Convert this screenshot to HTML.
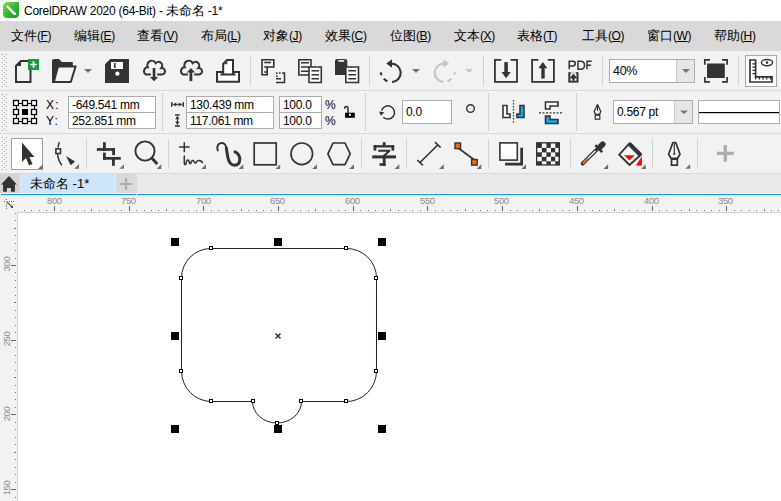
<!DOCTYPE html>
<html><head><meta charset="utf-8">
<style>
*{margin:0;padding:0;box-sizing:border-box}
html,body{width:781px;height:501px;overflow:hidden;background:#fff;font-family:"Liberation Sans",sans-serif;color:#000}
.a{position:absolute}
.mi{position:absolute;top:27px;font-size:13px;line-height:18px;color:#000;white-space:nowrap;font-weight:500}
.t{position:absolute;white-space:nowrap;font-size:12px;line-height:15px;color:#000;letter-spacing:-0.3px}
.inp{position:absolute;background:#fff;border:1px solid #adadad}
.p{font-size:12px;letter-spacing:-0.4px}
.rl{position:absolute;font-size:10px;line-height:10px;color:#8a8a8a;white-space:nowrap;letter-spacing:-0.6px}
</style></head><body>
<!-- backgrounds -->
<div class="a" style="left:0;top:0;width:781px;height:21px;background:#fff"></div>
<div class="a" style="left:0;top:21px;width:781px;height:30px;background:#d9d9d9"></div>
<div class="a" style="left:0;top:51px;width:781px;height:123px;background:#f2f2f2"></div>
<div class="a" style="left:0;top:90px;width:781px;height:1px;background:#dadada"></div>
<div class="a" style="left:0;top:133px;width:781px;height:1px;background:#dadada"></div>
<div class="a" style="left:0;top:173px;width:781px;height:1px;background:#dadada"></div>
<div class="a" style="left:0;top:174px;width:781px;height:19px;background:#e9e9e9"></div>
<div class="a" style="left:0;top:174px;width:20px;height:19px;background:#d4d4d4"></div>
<div class="a" style="left:21px;top:174px;width:94px;height:19px;background:#cde4fa"></div>
<div class="a" style="left:116px;top:174px;width:21px;height:19px;background:#d9d9d9"></div>
<div class="a" style="left:0;top:193px;width:781px;height:1px;background:#f3f3f3"></div><div class="a" style="left:1px;top:194px;width:780px;height:1px;background:#0a9af0"></div>
<div class="a" style="left:0;top:195px;width:781px;height:306px;background:#f2f2f2"></div>
<div class="a" style="left:17px;top:212px;width:764px;height:289px;background:#d0d0d0"></div>
<div class="a" style="left:18px;top:213px;width:763px;height:288px;background:#fff"></div>

<!-- title -->
<div class="t" style="left:24px;top:3.5px;font-size:12px;letter-spacing:-0.25px">CorelDRAW 2020 (64-Bit) - <span style="font-size:12.6px;letter-spacing:0">未命名</span> -1*</div>
<!-- menu -->
<div class="mi" style="left:11px">文件<span class="p">(<u>F</u>)</span></div>
<div class="mi" style="left:74px">编辑<span class="p">(<u>E</u>)</span></div>
<div class="mi" style="left:137px">查看<span class="p">(<u>V</u>)</span></div>
<div class="mi" style="left:201px">布局<span class="p">(<u>L</u>)</span></div>
<div class="mi" style="left:263px">对象<span class="p">(<u>J</u>)</span></div>
<div class="mi" style="left:325px">效果<span class="p">(<u>C</u>)</span></div>
<div class="mi" style="left:390px">位图<span class="p">(<u>B</u>)</span></div>
<div class="mi" style="left:454px">文本<span class="p">(<u>X</u>)</span></div>
<div class="mi" style="left:517px">表格<span class="p">(<u>T</u>)</span></div>
<div class="mi" style="left:582px">工具<span class="p">(<u>O</u>)</span></div>
<div class="mi" style="left:647px">窗口<span class="p">(<u>W</u>)</span></div>
<div class="mi" style="left:714px">帮助<span class="p">(<u>H</u>)</span></div>

<!-- toolbar1 widgets -->
<div class="inp" style="left:609px;top:59px;width:86px;height:24px"></div>
<div class="a" style="left:676px;top:60px;width:18px;height:22px;background:#e6e6e6;border-left:1px solid #c8c8c8"></div>
<div class="t" style="left:613px;top:64px;font-size:12.5px">40%</div>
<div class="a" style="left:745px;top:55px;width:32px;height:32px;background:#fcfcfc;border:1px solid #a8a8a8"></div>


<!-- property bar widgets -->
<div class="t" style="left:46px;top:98px;letter-spacing:1.2px">X:</div>
<div class="t" style="left:46px;top:114px;letter-spacing:1.2px">Y:</div>
<div class="inp" style="left:68px;top:96px;width:88px;height:33px"></div>
<div class="a" style="left:69px;top:112px;width:86px;height:1px;background:#adadad"></div>
<div class="t" style="left:72px;top:98px">-649.541 mm</div>
<div class="t" style="left:72px;top:114px">252.851 mm</div>
<div class="inp" style="left:186px;top:96px;width:88px;height:33px"></div>
<div class="a" style="left:187px;top:112px;width:86px;height:1px;background:#adadad"></div>
<div class="t" style="left:190px;top:98px">130.439 mm</div>
<div class="t" style="left:190px;top:114px">117.061 mm</div>
<div class="inp" style="left:279px;top:96px;width:43px;height:33px"></div>
<div class="a" style="left:280px;top:112px;width:41px;height:1px;background:#adadad"></div>
<div class="t" style="left:283px;top:98px">100.0</div>
<div class="t" style="left:283px;top:114px">100.0</div>
<div class="t" style="left:325px;top:98px">%</div>
<div class="t" style="left:325px;top:114px">%</div>
<div class="inp" style="left:402px;top:100px;width:50px;height:24px"></div>
<div class="t" style="left:406px;top:105px">0.0</div>
<div class="inp" style="left:613px;top:100px;width:80px;height:24px"></div>
<div class="a" style="left:674px;top:101px;width:18px;height:22px;background:#e6e6e6;border-left:1px solid #c8c8c8"></div>
<div class="t" style="left:617px;top:105px">0.567 pt</div>
<div class="inp" style="left:698px;top:100px;width:82px;height:24px"></div>

<!-- tab text -->
<div class="t" style="left:30px;top:175.5px;font-size:13px;line-height:16px;letter-spacing:0px;font-weight:500">未命名 -1*</div>

<!-- rulers labels -->
<div class="rl" style="left:47px;top:196px;font-size:9.5px;letter-spacing:-0.4px">800</div>
<div class="rl" style="left:121px;top:196px;font-size:9.5px;letter-spacing:-0.4px">750</div>
<div class="rl" style="left:196px;top:196px;font-size:9.5px;letter-spacing:-0.4px">700</div>
<div class="rl" style="left:270px;top:196px;font-size:9.5px;letter-spacing:-0.4px">650</div>
<div class="rl" style="left:345px;top:196px;font-size:9.5px;letter-spacing:-0.4px">600</div>
<div class="rl" style="left:420px;top:196px;font-size:9.5px;letter-spacing:-0.4px">550</div>
<div class="rl" style="left:494px;top:196px;font-size:9.5px;letter-spacing:-0.4px">500</div>
<div class="rl" style="left:569px;top:196px;font-size:9.5px;letter-spacing:-0.4px">450</div>
<div class="rl" style="left:644px;top:196px;font-size:9.5px;letter-spacing:-0.4px">400</div>
<div class="rl" style="left:718px;top:196px;font-size:9.5px;letter-spacing:-0.4px">350</div>

<svg class="a" style="left:0;top:0" width="781" height="501" viewBox="0 0 781 501">
<defs>
  <pattern id="grip" width="4" height="4" patternUnits="userSpaceOnUse">
    <rect x="0" y="0" width="1" height="1" fill="#c4c4c4"/><rect x="2" y="2" width="1" height="1" fill="#c4c4c4"/>
  </pattern>
  <g id="cm"><path d="M0,4.6 L4.8,0 V4.6 Z" fill="#6f6f6f"/></g>
</defs>
<!-- logo -->
<defs><linearGradient id="lg" x1="0" y1="0" x2="1" y2="1"><stop offset="0" stop-color="#8ae43a"/><stop offset="0.45" stop-color="#3cbc36"/><stop offset="1" stop-color="#12982a"/></linearGradient></defs>
<path d="M8,2 H19 V13.5 Q19,18 14.5,18 H7.5 Q3,18 3,13.5 V7 Q3,2 8,2 Z" fill="url(#lg)"/>
<path d="M7.2,7.6 L14,14.4" stroke="#0e6e18" stroke-width="2.8" stroke-linecap="round" opacity="0.55"/>
<path d="M7.6,6.9 L14.4,13.7" stroke="#f2f2f2" stroke-width="2.7" stroke-linecap="round"/>
<path d="M13.2,14.8 L16.3,15.2 L15.6,12.2 Z" fill="#e8e8e8"/>
<!-- grips -->
<g fill="#a8a8a8"><rect x="2" y="54" width="1" height="1"/><rect x="6" y="54" width="1" height="1"/><rect x="4" y="56" width="1" height="1"/><rect x="2" y="58" width="1" height="1"/><rect x="6" y="58" width="1" height="1"/><rect x="4" y="60" width="1" height="1"/><rect x="2" y="62" width="1" height="1"/><rect x="6" y="62" width="1" height="1"/><rect x="4" y="64" width="1" height="1"/><rect x="2" y="66" width="1" height="1"/><rect x="6" y="66" width="1" height="1"/><rect x="4" y="68" width="1" height="1"/><rect x="2" y="70" width="1" height="1"/><rect x="6" y="70" width="1" height="1"/><rect x="4" y="72" width="1" height="1"/><rect x="2" y="74" width="1" height="1"/><rect x="6" y="74" width="1" height="1"/><rect x="4" y="76" width="1" height="1"/><rect x="2" y="78" width="1" height="1"/><rect x="6" y="78" width="1" height="1"/><rect x="4" y="80" width="1" height="1"/><rect x="2" y="82" width="1" height="1"/><rect x="6" y="82" width="1" height="1"/><rect x="4" y="84" width="1" height="1"/><rect x="2" y="86" width="1" height="1"/><rect x="6" y="86" width="1" height="1"/><rect x="2" y="94" width="1" height="1"/><rect x="6" y="94" width="1" height="1"/><rect x="4" y="96" width="1" height="1"/><rect x="2" y="98" width="1" height="1"/><rect x="6" y="98" width="1" height="1"/><rect x="4" y="100" width="1" height="1"/><rect x="2" y="102" width="1" height="1"/><rect x="6" y="102" width="1" height="1"/><rect x="4" y="104" width="1" height="1"/><rect x="2" y="106" width="1" height="1"/><rect x="6" y="106" width="1" height="1"/><rect x="4" y="108" width="1" height="1"/><rect x="2" y="110" width="1" height="1"/><rect x="6" y="110" width="1" height="1"/><rect x="4" y="112" width="1" height="1"/><rect x="2" y="114" width="1" height="1"/><rect x="6" y="114" width="1" height="1"/><rect x="4" y="116" width="1" height="1"/><rect x="2" y="118" width="1" height="1"/><rect x="6" y="118" width="1" height="1"/><rect x="4" y="120" width="1" height="1"/><rect x="2" y="122" width="1" height="1"/><rect x="6" y="122" width="1" height="1"/><rect x="4" y="124" width="1" height="1"/><rect x="2" y="126" width="1" height="1"/><rect x="6" y="126" width="1" height="1"/><rect x="4" y="128" width="1" height="1"/><rect x="2" y="130" width="1" height="1"/><rect x="6" y="130" width="1" height="1"/><rect x="2" y="137" width="1" height="1"/><rect x="6" y="137" width="1" height="1"/><rect x="4" y="139" width="1" height="1"/><rect x="2" y="141" width="1" height="1"/><rect x="6" y="141" width="1" height="1"/><rect x="4" y="143" width="1" height="1"/><rect x="2" y="145" width="1" height="1"/><rect x="6" y="145" width="1" height="1"/><rect x="4" y="147" width="1" height="1"/><rect x="2" y="149" width="1" height="1"/><rect x="6" y="149" width="1" height="1"/><rect x="4" y="151" width="1" height="1"/><rect x="2" y="153" width="1" height="1"/><rect x="6" y="153" width="1" height="1"/><rect x="4" y="155" width="1" height="1"/><rect x="2" y="157" width="1" height="1"/><rect x="6" y="157" width="1" height="1"/><rect x="4" y="159" width="1" height="1"/><rect x="2" y="161" width="1" height="1"/><rect x="6" y="161" width="1" height="1"/><rect x="4" y="163" width="1" height="1"/><rect x="2" y="165" width="1" height="1"/><rect x="6" y="165" width="1" height="1"/><rect x="4" y="167" width="1" height="1"/><rect x="2" y="169" width="1" height="1"/><rect x="6" y="169" width="1" height="1"/></g>
<!-- ===== toolbar 1 icons ===== -->
<!-- new doc -->
<path d="M30.5,70 V82 H16 V66 L21,61 H28" fill="none" stroke="#333" stroke-width="2"/>
<path d="M15,66 L21,60 V66 Z" fill="#333"/>
<rect x="28" y="59" width="11" height="11" fill="#129c3c"/>
<path d="M33.5,61.3 V67.7 M30.3,64.5 H36.7" stroke="#fff" stroke-width="1.7"/>
<!-- open folder -->
<path d="M52,83 V61 Q52,59 54,59 H59 L62,62 H72.8 V66.5 H58 L54.5,83 Z" fill="#333"/>
<path d="M58,66.5 H75.6 L70.8,82 H53.8 Z" fill="#f4f4f4" stroke="#333" stroke-width="2" stroke-linejoin="round"/>
<path d="M84,69 H92 L88,73 Z" fill="#777"/>
<!-- save -->
<path d="M105,64.2 L110.3,59 H129 V83 H105 Z" fill="#333"/>
<rect x="111" y="62" width="12" height="7" fill="#fff"/>
<rect x="114" y="63" width="1.6" height="5" fill="#333"/>
<circle cx="117.4" cy="73.7" r="2.1" fill="#fff"/>
<!-- cloud down -->
<path d="M150.9,74.6 H146.2 A3.9,3.9 0 0 1 147.8,67.2 A4.3,4.3 0 0 1 155.7,63.2 A3.4,3.4 0 0 1 161.4,68 A3.3,3.3 0 0 1 162,74.6 H157.2" fill="none" stroke="#333" stroke-width="2"/>
<rect x="152.7" y="68" width="2.7" height="9.5" fill="#333"/>
<path d="M149.9,77 H158.2 L154.05,81.3 Z" fill="#333"/>
<!-- cloud up -->
<path d="M150.9,74.6 H146.2 A3.9,3.9 0 0 1 147.8,67.2 A4.3,4.3 0 0 1 155.7,63.2 A3.4,3.4 0 0 1 161.4,68 A3.3,3.3 0 0 1 162,74.6 H157.2" transform="translate(37,0)" fill="none" stroke="#333" stroke-width="2"/>
<rect x="189.5" y="71.5" width="2.8" height="9.6" fill="#333"/>
<path d="M186.9,72.4 H195 L190.95,68 Z" fill="#333"/>
<!-- print -->
<path d="M223.2,74.5 V63.8 L227,60 H233 V74.5" fill="#fff" stroke="#333" stroke-width="2"/>
<path d="M224.3,64.2 H227.3 V61.2 Z" fill="#333"/>
<path d="M220.5,74.5 H235.5" stroke="#333" stroke-width="2"/>
<path d="M223.2,71.9 H217 V81.7 H239 V71.9 H233" fill="#fff" stroke="#333" stroke-width="2"/><path d="M223.2,72 V74.5 M233,72 V74.5 M220.5,74.5 H235.5" stroke="#333" stroke-width="2"/>
<!-- separators tb1 -->
<rect x="250" y="56" width="1" height="30" fill="#d2d2d2"/>
<rect x="369" y="56" width="1" height="30" fill="#d2d2d2"/>
<rect x="483" y="56" width="1" height="30" fill="#d2d2d2"/>
<rect x="602" y="56" width="1" height="30" fill="#d2d2d2"/>
<rect x="738" y="56" width="1" height="30" fill="#d2d2d2"/>
<!-- cut -->
<path d="M262,59.8 H273.8 V67 H267.2 V74.8 H262 Z" fill="none" stroke="#333" stroke-width="1.6"/>
<path d="M264.2,62.5 H271 M264.2,67 H267.2 M264.2,72 H267.2" stroke="#333" stroke-width="1.4"/>
<rect x="276" y="72.3" width="1.6" height="1.6" fill="#333"/><rect x="279" y="72.3" width="1.6" height="1.6" fill="#333"/><rect x="276" y="75.5" width="1.6" height="1.6" fill="#333"/>
<path d="M282,73 H284.5 V82.5 H276 M276,78.8 H281" fill="none" stroke="#333" stroke-width="1.5"/>
<!-- copy -->
<path d="M298.8,59.8 H311 V75 H298.8 Z" fill="#f2f2f2" stroke="#333" stroke-width="1.6"/>
<path d="M301,62.7 H309 M301,67 H309 M301,71.3 H309" stroke="#333" stroke-width="1.4"/>
<path d="M309,67 H321.3 V82.5 H309 Z" fill="#fff" stroke="#333" stroke-width="1.6"/>
<path d="M311.5,70.7 H319 M311.5,74.7 H319 M311.5,78.7 H319" stroke="#333" stroke-width="1.4"/>
<!-- paste -->
<path d="M335,61 Q335,59 337,59 H345 Q347.3,59 347.3,61 V75 H335 Z" fill="#333"/>
<rect x="338.3" y="60" width="6" height="1.8" fill="#e8e8e8"/>
<path d="M345.8,67 H358.5 V82.5 H345.8 Z" fill="#fff" stroke="#333" stroke-width="1.6"/>
<path d="M348.3,70.7 H356 M348.3,74.7 H356 M348.3,78.7 H356" stroke="#333" stroke-width="1.4"/>
<!-- undo -->
<path d="M391,63.6 A9.2,9.2 0 1 1 392,82" fill="none" stroke="#333" stroke-width="2.1"/>
<path d="M383.7,78.8 L387.4,81.3 M380.6,72.4 L381.5,75.3" stroke="#333" stroke-width="2.1"/>
<path d="M386.2,63.5 L392,59.3 V67.7 Z" fill="#333"/>
<path d="M412,69 H420 L416,73 Z" fill="#777"/>
<!-- redo -->
<path d="M444.4,63.6 A9.2,9.2 0 1 0 443.4,82" fill="none" stroke="#c4c4c4" stroke-width="2.1"/>
<path d="M447.6,81.3 L451.6,78.6 M454.2,74.8 L455,72.2" stroke="#c4c4c4" stroke-width="2.1"/>
<path d="M449.1,63.5 L443.4,59.5 V67.5 Z" fill="#c4c4c4"/>
<path d="M465,69 H473 L469,73 Z" fill="#c8c8c8"/>
<!-- import -->
<path d="M501.2,59.9 H494.9 V81.8 H517 V59.9 H510.6" fill="none" stroke="#333" stroke-width="1.8"/>
<rect x="504.3" y="62.1" width="3.6" height="10.5" fill="#333"/>
<path d="M501.5,72 H510.7 L506.1,78.3 Z" fill="#333"/>
<!-- export -->
<path d="M538.4,59.9 H532.1 V81.8 H553.9 V59.9 H547.8" fill="none" stroke="#333" stroke-width="1.8"/>
<rect x="541.3" y="67.5" width="3.4" height="11.1" fill="#333"/>
<path d="M538.3,68.2 H547.4 L542.85,62 Z" fill="#333"/>
<!-- pdf small icon -->
<path d="M569.2,69.3 V61.3 H572.8 Q575.3,61.3 575.3,63.6 Q575.3,66 572.8,66 H569.2" fill="none" stroke="#333" stroke-width="1.5"/>
<path d="M578,61.3 V69.3 H580.6 Q584.5,69.3 584.5,65.3 Q584.5,61.3 580.6,61.3 Z" fill="none" stroke="#333" stroke-width="1.5"/>
<path d="M591.7,61.3 H587 V69.3 M587,65.2 H591" fill="none" stroke="#333" stroke-width="1.5"/>
<rect x="568.3" y="72.2" width="10.2" height="10.4" fill="#333"/>
<rect x="570.3" y="73.6" width="6.2" height="7.1" fill="#f2f2f2"/>
<rect x="570.8" y="72.2" width="5.2" height="1.5" fill="#f2f2f2"/>
<path d="M573.4,73.8 L576.5,77.2 V78.5 H570.3 V77.2 Z" fill="#333"/>
<rect x="572.3" y="77" width="2.2" height="3.7" fill="#333"/>
<!-- zoom arrow -->
<path d="M682,69 H690 L686,73 Z" fill="#777"/>
<!-- fullscreen -->
<path d="M704.8,64.7 V59.8 H710 M722,59.8 H727.1 V64.7 M727.1,77 V81.8 H722 M710,81.8 H704.8 V77" fill="none" stroke="#333" stroke-width="1.7"/>
<rect x="707" y="63.5" width="17.8" height="14.5" fill="#333"/>
<!-- ruler icon -->
<path d="M750,60 H755.6 V76.8 H772 V82 H750 Z" fill="#fff" stroke="#333" stroke-width="1.7"/>
<path d="M752.4,63.8 H755 M752.4,67.1 H755 M752.4,70.4 H755 M752.4,73.7 H755 M755.6,79.6 V77 M759.3,79.6 V77 M763,79.6 V77 M766.7,79.6 V77 M770.4,79.6 V77" stroke="#333" stroke-width="1.3"/>
<ellipse cx="767" cy="62.6" rx="5.6" ry="3.1" fill="none" stroke="#333" stroke-width="1.4"/>
<circle cx="767" cy="62.6" r="1.3" fill="#333"/>
<!-- ===== property bar ===== -->
<g fill="#fff" stroke="#000" stroke-width="1.3">
  <rect x="13.5" y="100.5" width="5" height="5"/><rect x="22.5" y="100.5" width="5" height="5"/><rect x="31.5" y="100.5" width="5" height="5"/>
  <rect x="13.5" y="109.5" width="5" height="5"/><rect x="31.5" y="109.5" width="5" height="5"/>
  <rect x="13.5" y="118.5" width="5" height="5"/><rect x="22.5" y="118.5" width="5" height="5"/><rect x="31.5" y="118.5" width="5" height="5"/>
</g>
<path d="M19,103.5 H22 M28,103.5 H31 M19,121.5 H22 M28,121.5 H31 M16.5,106 V109 M16.5,115 V118 M34.5,106 V109 M34.5,115 V118" stroke="#000" stroke-width="1"/>
<rect x="22" y="109" width="6" height="6" fill="#000"/>
<rect x="162" y="93" width="1" height="38" fill="#d2d2d2"/>
<!-- width icon -->
<rect x="171" y="102.2" width="1.6" height="4.5" fill="#333"/><rect x="182.4" y="102.2" width="1.6" height="4.5" fill="#333"/>
<path d="M174,104.45 H181" stroke="#333" stroke-width="1"/>
<path d="M172.6,104.45 L176.3,102.4 V106.5 Z M182.4,104.45 L178.7,102.4 V106.5 Z" fill="#333"/>
<!-- height icon -->
<rect x="175" y="114.2" width="4.8" height="1.4" fill="#333"/><rect x="175" y="125.2" width="4.8" height="1.6" fill="#333"/>
<path d="M177.4,117 V123" stroke="#333" stroke-width="1"/>
<path d="M177.4,115.6 L175.3,119.2 H179.5 Z M177.4,125.2 L175.3,121.6 H179.5 Z" fill="#333"/>
<!-- lock -->
<path d="M344.6,108.8 Q344.6,106.4 346.3,106.4 Q348,106.4 348,108.6 V113" fill="none" stroke="#222" stroke-width="1.4"/>
<rect x="345.1" y="112.7" width="9.7" height="5.1" fill="#000"/>
<rect x="349" y="113.8" width="1.8" height="2" fill="#fff"/>
<rect x="365" y="93" width="1" height="38" fill="#d2d2d2"/>
<!-- rotate -->
<path d="M381.6,110.5 A6.6,6.6 0 1 1 383.3,117.2" fill="none" stroke="#333" stroke-width="1.5"/>
<path d="M379,111.6 L384.4,112.3 L380.8,115.8 Z" fill="#333"/>
<circle cx="470.5" cy="108.5" r="3.8" fill="none" stroke="#333" stroke-width="1.4"/>
<rect x="488" y="93" width="1" height="38" fill="#d2d2d2"/>
<!-- mirror h -->
<path d="M503,105.5 H507 V114 H510 V117.5 H503 Z" fill="#fff" stroke="#333" stroke-width="1.6"/>
<path d="M513.5,100 V124" stroke="#333" stroke-width="1.2" stroke-dasharray="1.5,1.5"/>
<path d="M524,105.5 H520 V114 H517 V117.5 H524 Z" fill="#14a8f8" stroke="#333" stroke-width="1.6"/>
<!-- mirror v -->
<path d="M545.5,102 H558 V106 H550 V109 H545.5 Z" fill="#fff" stroke="#333" stroke-width="1.6"/>
<path d="M539,112.8 H563" stroke="#333" stroke-width="1.2" stroke-dasharray="2,1.5"/>
<path d="M545.5,123.5 H558 V119.5 H550 V116 H545.5 Z" fill="#14a8f8" stroke="#333" stroke-width="1.6"/>
<rect x="576" y="93" width="1" height="38" fill="#d2d2d2"/>
<!-- pen small -->
<path d="M597.5,104.5 L600.8,111.5 L599.5,114.5 H595.5 L594.2,111.5 Z" fill="none" stroke="#333" stroke-width="1.3" stroke-linejoin="round"/>
<path d="M597.5,106 V111" stroke="#333" stroke-width="1"/>
<rect x="595.2" y="115.2" width="4.6" height="4" fill="none" stroke="#333" stroke-width="1.2"/>
<path d="M680,110.5 H688 L684,114 Z" fill="#777"/>
<rect x="699" y="112" width="80" height="1.2" fill="#000"/>

<!-- ===== toolbox ===== -->
<rect x="11.5" y="138.5" width="31" height="31" fill="#fff" stroke="#a0a0a0" stroke-width="1"/>
<path d="M22,142.5 V162 L26,158 L29,165.5 L32.5,164 L29.5,157 H34.5 Z" fill="#333"/>
<use href="#cm" x="38" y="164.3"/>
<!-- shape tool -->
<path d="M59.3,142.3 L57.8,147.5 M57.5,153.5 Q58,160 61.8,165.3" fill="none" stroke="#333" stroke-width="1.5"/>
<rect x="55.9" y="148.9" width="4.6" height="4.6" fill="#fff" stroke="#333" stroke-width="1.6"/>
<path d="M65.9,155.9 L75.1,161.5 L70.7,165.2 Z" fill="#333"/>
<use href="#cm" x="74.2" y="164.1"/>
<rect x="86" y="139" width="1" height="30" fill="#d2d2d2"/>
<!-- crop -->
<g fill="#333">
<rect x="103" y="142.2" width="2.8" height="8.6"/><rect x="96.9" y="148.1" width="18.1" height="2.7"/><rect x="112.2" y="148.1" width="2.8" height="7.1"/>
<rect x="103" y="152.6" width="2.8" height="7.1"/><rect x="103" y="157" width="17.8" height="2.7"/><rect x="112" y="157" width="2.8" height="8.8"/>
</g>
<path d="M119.2,168.8 L124,164.2 V168.8 Z" fill="#777"/>
<!-- zoom -->
<circle cx="145" cy="151" r="9.6" fill="none" stroke="#333" stroke-width="1.9"/>
<path d="M151.5,157.8 L157.3,164" stroke="#333" stroke-width="3"/>
<use href="#cm" x="156.5" y="164.3"/>
<rect x="168" y="139" width="1" height="30" fill="#d2d2d2"/>
<!-- freehand -->
<path d="M184.3,142.2 V152.3 M179.1,147 H189.7" stroke="#333" stroke-width="1.5"/>
<path d="M184.3,156 V163.5 Q184.5,165.5 186,164 Q186.5,160 187.8,160 Q189,160 189.3,162.5 Q189.8,164.5 191,163 Q191.5,160.2 193,160.5 Q194.2,161 194.5,162.5 Q195.2,164 196.5,162 Q197.5,160 199.5,160.5 Q201.5,161 202.5,162.5" fill="none" stroke="#333" stroke-width="1.5" stroke-linecap="round"/>
<use href="#cm" x="201.2" y="164.3"/>
<!-- artistic media -->
<path d="M217.8,150.5 Q216,145 220.5,143.2 Q225,142 226.3,147.5 Q227,151" fill="none" stroke="#333" stroke-width="1.9" stroke-linecap="round"/>
<path d="M226.3,148 Q227,153 228,158 Q229.5,165 234.5,165.3 Q239.5,165.2 239.8,159.5 Q239.8,154 235,151.8" fill="none" stroke="#333" stroke-width="3" stroke-linecap="round"/>
<use href="#cm" x="238.5" y="164.3"/>
<!-- rect -->
<rect x="254.2" y="143" width="22" height="21.8" fill="none" stroke="#333" stroke-width="1.7"/>
<use href="#cm" x="275.4" y="164.3"/>
<!-- ellipse -->
<circle cx="301.8" cy="153.8" r="10.8" fill="none" stroke="#333" stroke-width="1.7"/>
<use href="#cm" x="312.2" y="164.3"/>
<!-- polygon -->
<path d="M333,143 H345 L350.2,153.8 L345,164.7 H333 L327.9,153.8 Z" fill="none" stroke="#333" stroke-width="1.7" stroke-linejoin="round"/>
<use href="#cm" x="349.2" y="164.3"/>
<rect x="361" y="139" width="1" height="30" fill="#d2d2d2"/>
<!-- text 字 -->
<g fill="#333">
<rect x="382.7" y="142.2" width="2.9" height="3.5"/>
<rect x="373.6" y="145.2" width="20.6" height="2.3"/>
<rect x="373.6" y="145.2" width="2.7" height="5.4"/><rect x="391.5" y="145.2" width="2.7" height="5.4"/>
<path d="M378.2,149.7 H390.2 V151.6 L385.3,156 H382.2 L387,151.7 H378.2 Z"/>
<rect x="372.2" y="155.4" width="23.8" height="3"/>
<rect x="382.8" y="155.4" width="2.8" height="10.4"/>
<rect x="379.5" y="163.2" width="6.1" height="2.6"/>
</g>
<use href="#cm" x="394.5" y="164.3"/>
<rect x="406" y="139" width="1" height="30" fill="#d2d2d2"/>
<!-- dimension -->
<path d="M420.5,162 L437.5,145.3 M417.3,160 L422.9,165.4 M435,142.1 L440.6,147.5" stroke="#333" stroke-width="1.6"/>
<use href="#cm" x="439" y="164.3"/>
<!-- connector -->
<path d="M457.5,147.5 L474.5,160" stroke="#333" stroke-width="1.6"/>
<rect x="455" y="143" width="5.6" height="5.6" fill="#ff6a00" stroke="#333" stroke-width="1.4"/>
<rect x="471.6" y="159.5" width="5.6" height="5.6" fill="#ff6a00" stroke="#333" stroke-width="1.4"/>
<use href="#cm" x="476.5" y="164.3"/>
<rect x="488" y="139" width="1" height="30" fill="#d2d2d2"/>
<!-- shadow -->
<path d="M520.3,147.7 H523 V165.6 H505.1 V162.8 H520.3 Z" fill="#333"/>
<rect x="499.9" y="142.9" width="17.4" height="17.2" fill="#fff" stroke="#333" stroke-width="1.6"/>
<use href="#cm" x="521.2" y="164.3"/>
<!-- transparency -->
<rect x="536" y="142.1" width="24" height="23.5" fill="#333"/>
<g fill="#fff"><rect x="541.9" y="143.5" width="4.5" height="4.4"/><rect x="550.8" y="143.5" width="4.5" height="4.4"/><rect x="537.3" y="147.9" width="4.5" height="4.4"/><rect x="546.5" y="147.9" width="4.5" height="4.4"/><rect x="555.2" y="147.9" width="3.3" height="4.4"/><rect x="541.9" y="152.4" width="4.5" height="4.4"/><rect x="550.8" y="152.4" width="4.5" height="4.4"/><rect x="537.3" y="156.8" width="4.5" height="4.4"/><rect x="546.5" y="156.8" width="4.5" height="4.4"/><rect x="555.2" y="156.8" width="3.3" height="4.4"/><rect x="541.9" y="161.3" width="4.5" height="3.0"/><rect x="550.8" y="161.3" width="4.5" height="3.0"/></g>
<rect x="570" y="139" width="1" height="30" fill="#d2d2d2"/>
<!-- eyedropper -->
<path d="M582.6,163.7 L596.2,150.1" stroke="#333" stroke-width="3.8" stroke-linecap="round"/>
<path d="M584,162.3 L595.5,150.8" stroke="#fff" stroke-width="1.3"/>
<path d="M583.2,163.1 L587.6,158.7" stroke="#f26b1d" stroke-width="1.7" stroke-linecap="round"/>
<path d="M595.3,145.2 L602.2,152.1" stroke="#333" stroke-width="2.6"/>
<path d="M599.3,147.7 L602.7,144.3" stroke="#333" stroke-width="5.8" stroke-linecap="round"/>
<use href="#cm" x="603.3" y="164.3"/>
<!-- fill -->
<path d="M629.5,143.3 L641,154.6 L629.5,165 L619.2,154.6 Z" fill="#f8f8f8" stroke="#333" stroke-width="1.9" stroke-linejoin="miter"/>
<path d="M629.5,144 L640.5,155" stroke="#333" stroke-width="4"/>
<path d="M623.9,155.3 H634.8 L629.4,160.2 Z" fill="#f00"/>
<path d="M635.9,165.6 L641.9,156.2 V165.6 Z" fill="#f00"/>
<use href="#cm" x="641" y="164.3"/>
<rect x="652" y="139" width="1" height="30" fill="#d2d2d2"/>
<!-- pen -->
<path d="M672.9,142.6 H675.8 L680,154.3 L677.6,158.3 H671 L668.6,154.3 Z" fill="none" stroke="#333" stroke-width="1.7" stroke-linejoin="round"/>
<path d="M674.3,143.5 V154" stroke="#333" stroke-width="1.2"/>
<circle cx="674.3" cy="154" r="1.1" fill="#333"/>
<rect x="671.5" y="159.2" width="5.8" height="6" fill="none" stroke="#333" stroke-width="1.7"/>
<use href="#cm" x="685.4" y="164.1"/>
<rect x="697" y="139" width="1" height="30" fill="#d2d2d2"/>
<!-- plus -->
<path d="M725.3,145 V161.8 M716.9,153.4 H733.8" stroke="#adadad" stroke-width="3.4"/>

<!-- ===== tab bar ===== -->
<path d="M9,176 L1,184.6 H3.1 V191.7 H6.9 V188 H11 V191.7 H14.9 V184.6 H16.9 Z" fill="#333"/>
<path d="M126,178 V189.8 M119.8,184 H132" stroke="#adadad" stroke-width="2.2"/><rect x="136" y="194" width="1" height="2" fill="#f3f3f3"/>

<!-- ===== rulers ===== -->
<g fill="#666">
<rect x="6" y="199" width="1" height="1"/><rect x="4" y="201" width="1" height="1"/><rect x="9" y="201" width="1" height="1"/><rect x="11" y="201" width="1" height="1"/><rect x="13" y="201" width="1" height="1"/>
<rect x="6" y="204" width="1" height="1"/><rect x="6" y="206" width="1" height="1"/><rect x="6" y="208" width="1" height="1"/>
<rect x="11" y="206" width="2" height="2" fill="#444"/>
</g>
<path d="M6.5,201.5 L12,207" stroke="#555" stroke-width="1.1"/>
<g id="hticks"><rect x="24" y="210" width="1" height="1" fill="#777"/><rect x="31" y="210" width="1" height="1" fill="#777"/><rect x="39" y="210" width="1" height="1" fill="#777"/><rect x="46" y="210" width="1" height="1" fill="#777"/><rect x="54" y="206" width="1" height="5" fill="#666"/><rect x="61" y="210" width="1" height="1" fill="#777"/><rect x="69" y="210" width="1" height="1" fill="#777"/><rect x="76" y="210" width="1" height="1" fill="#777"/><rect x="84" y="210" width="1" height="1" fill="#777"/><rect x="91" y="209" width="1" height="2" fill="#777"/><rect x="99" y="210" width="1" height="1" fill="#777"/><rect x="106" y="210" width="1" height="1" fill="#777"/><rect x="114" y="210" width="1" height="1" fill="#777"/><rect x="121" y="210" width="1" height="1" fill="#777"/><rect x="129" y="206" width="1" height="5" fill="#666"/><rect x="136" y="210" width="1" height="1" fill="#777"/><rect x="144" y="210" width="1" height="1" fill="#777"/><rect x="151" y="210" width="1" height="1" fill="#777"/><rect x="158" y="210" width="1" height="1" fill="#777"/><rect x="166" y="209" width="1" height="2" fill="#777"/><rect x="173" y="210" width="1" height="1" fill="#777"/><rect x="181" y="210" width="1" height="1" fill="#777"/><rect x="188" y="210" width="1" height="1" fill="#777"/><rect x="196" y="210" width="1" height="1" fill="#777"/><rect x="203" y="206" width="1" height="5" fill="#666"/><rect x="211" y="210" width="1" height="1" fill="#777"/><rect x="218" y="210" width="1" height="1" fill="#777"/><rect x="226" y="210" width="1" height="1" fill="#777"/><rect x="233" y="210" width="1" height="1" fill="#777"/><rect x="241" y="209" width="1" height="2" fill="#777"/><rect x="248" y="210" width="1" height="1" fill="#777"/><rect x="256" y="210" width="1" height="1" fill="#777"/><rect x="263" y="210" width="1" height="1" fill="#777"/><rect x="271" y="210" width="1" height="1" fill="#777"/><rect x="278" y="206" width="1" height="5" fill="#666"/><rect x="285" y="210" width="1" height="1" fill="#777"/><rect x="293" y="210" width="1" height="1" fill="#777"/><rect x="300" y="210" width="1" height="1" fill="#777"/><rect x="308" y="210" width="1" height="1" fill="#777"/><rect x="315" y="209" width="1" height="2" fill="#777"/><rect x="323" y="210" width="1" height="1" fill="#777"/><rect x="330" y="210" width="1" height="1" fill="#777"/><rect x="338" y="210" width="1" height="1" fill="#777"/><rect x="345" y="210" width="1" height="1" fill="#777"/><rect x="353" y="206" width="1" height="5" fill="#666"/><rect x="360" y="210" width="1" height="1" fill="#777"/><rect x="368" y="210" width="1" height="1" fill="#777"/><rect x="375" y="210" width="1" height="1" fill="#777"/><rect x="383" y="210" width="1" height="1" fill="#777"/><rect x="390" y="209" width="1" height="2" fill="#777"/><rect x="398" y="210" width="1" height="1" fill="#777"/><rect x="405" y="210" width="1" height="1" fill="#777"/><rect x="412" y="210" width="1" height="1" fill="#777"/><rect x="420" y="210" width="1" height="1" fill="#777"/><rect x="427" y="206" width="1" height="5" fill="#666"/><rect x="435" y="210" width="1" height="1" fill="#777"/><rect x="442" y="210" width="1" height="1" fill="#777"/><rect x="450" y="210" width="1" height="1" fill="#777"/><rect x="457" y="210" width="1" height="1" fill="#777"/><rect x="465" y="209" width="1" height="2" fill="#777"/><rect x="472" y="210" width="1" height="1" fill="#777"/><rect x="480" y="210" width="1" height="1" fill="#777"/><rect x="487" y="210" width="1" height="1" fill="#777"/><rect x="495" y="210" width="1" height="1" fill="#777"/><rect x="502" y="206" width="1" height="5" fill="#666"/><rect x="510" y="210" width="1" height="1" fill="#777"/><rect x="517" y="210" width="1" height="1" fill="#777"/><rect x="525" y="210" width="1" height="1" fill="#777"/><rect x="532" y="210" width="1" height="1" fill="#777"/><rect x="539" y="209" width="1" height="2" fill="#777"/><rect x="547" y="210" width="1" height="1" fill="#777"/><rect x="554" y="210" width="1" height="1" fill="#777"/><rect x="562" y="210" width="1" height="1" fill="#777"/><rect x="569" y="210" width="1" height="1" fill="#777"/><rect x="577" y="206" width="1" height="5" fill="#666"/><rect x="584" y="210" width="1" height="1" fill="#777"/><rect x="592" y="210" width="1" height="1" fill="#777"/><rect x="599" y="210" width="1" height="1" fill="#777"/><rect x="607" y="210" width="1" height="1" fill="#777"/><rect x="614" y="209" width="1" height="2" fill="#777"/><rect x="622" y="210" width="1" height="1" fill="#777"/><rect x="629" y="210" width="1" height="1" fill="#777"/><rect x="637" y="210" width="1" height="1" fill="#777"/><rect x="644" y="210" width="1" height="1" fill="#777"/><rect x="652" y="206" width="1" height="5" fill="#666"/><rect x="659" y="210" width="1" height="1" fill="#777"/><rect x="666" y="210" width="1" height="1" fill="#777"/><rect x="674" y="210" width="1" height="1" fill="#777"/><rect x="681" y="210" width="1" height="1" fill="#777"/><rect x="689" y="209" width="1" height="2" fill="#777"/><rect x="696" y="210" width="1" height="1" fill="#777"/><rect x="704" y="210" width="1" height="1" fill="#777"/><rect x="711" y="210" width="1" height="1" fill="#777"/><rect x="719" y="210" width="1" height="1" fill="#777"/><rect x="726" y="206" width="1" height="5" fill="#666"/><rect x="734" y="210" width="1" height="1" fill="#777"/><rect x="741" y="210" width="1" height="1" fill="#777"/><rect x="749" y="210" width="1" height="1" fill="#777"/><rect x="756" y="210" width="1" height="1" fill="#777"/><rect x="764" y="209" width="1" height="2" fill="#777"/><rect x="771" y="210" width="1" height="1" fill="#777"/><rect x="778" y="210" width="1" height="1" fill="#777"/><rect x="15" y="213" width="1" height="1" fill="#777"/><rect x="15" y="220" width="1" height="1" fill="#777"/><rect x="14" y="228" width="2" height="1" fill="#777"/><rect x="15" y="235" width="1" height="1" fill="#777"/><rect x="15" y="243" width="1" height="1" fill="#777"/><rect x="15" y="250" width="1" height="1" fill="#777"/><rect x="15" y="258" width="1" height="1" fill="#777"/><rect x="11" y="265" width="5" height="1" fill="#666"/><rect x="15" y="272" width="1" height="1" fill="#777"/><rect x="15" y="280" width="1" height="1" fill="#777"/><rect x="15" y="287" width="1" height="1" fill="#777"/><rect x="15" y="295" width="1" height="1" fill="#777"/><rect x="14" y="302" width="2" height="1" fill="#777"/><rect x="15" y="310" width="1" height="1" fill="#777"/><rect x="15" y="317" width="1" height="1" fill="#777"/><rect x="15" y="325" width="1" height="1" fill="#777"/><rect x="15" y="332" width="1" height="1" fill="#777"/><rect x="11" y="340" width="5" height="1" fill="#666"/><rect x="15" y="347" width="1" height="1" fill="#777"/><rect x="15" y="355" width="1" height="1" fill="#777"/><rect x="15" y="362" width="1" height="1" fill="#777"/><rect x="15" y="370" width="1" height="1" fill="#777"/><rect x="14" y="377" width="2" height="1" fill="#777"/><rect x="15" y="385" width="1" height="1" fill="#777"/><rect x="15" y="392" width="1" height="1" fill="#777"/><rect x="15" y="399" width="1" height="1" fill="#777"/><rect x="15" y="407" width="1" height="1" fill="#777"/><rect x="11" y="414" width="5" height="1" fill="#666"/><rect x="15" y="422" width="1" height="1" fill="#777"/><rect x="15" y="429" width="1" height="1" fill="#777"/><rect x="15" y="437" width="1" height="1" fill="#777"/><rect x="15" y="444" width="1" height="1" fill="#777"/><rect x="14" y="452" width="2" height="1" fill="#777"/><rect x="15" y="459" width="1" height="1" fill="#777"/><rect x="15" y="467" width="1" height="1" fill="#777"/><rect x="15" y="474" width="1" height="1" fill="#777"/><rect x="15" y="482" width="1" height="1" fill="#777"/><rect x="11" y="489" width="5" height="1" fill="#666"/><rect x="15" y="497" width="1" height="1" fill="#777"/></g>

<!-- ===== canvas shape ===== -->
<path d="M211,248.5 H346 A30,29.5 0 0 1 376.5,278 V371 A30,30.5 0 0 1 346,401.5 H301.5 A24.5,21.5 0 0 1 252.5,401.5 H211 A30,30.5 0 0 1 181.5,371 V278 A29.5,29.5 0 0 1 211,248.5 Z" fill="none" stroke="#2a2020" stroke-width="1"/>
<g fill="#fff" stroke="#000" stroke-width="1">
<rect x="209.5" y="246.5" width="3" height="3"/><rect x="344.5" y="246.5" width="3" height="3"/>
<rect x="179.5" y="276.5" width="3" height="3"/><rect x="374.5" y="276.5" width="3" height="3"/>
<rect x="179.5" y="369.5" width="3" height="3"/><rect x="374.5" y="369.5" width="3" height="3"/>
<rect x="209.5" y="399.5" width="3" height="3"/><rect x="251.5" y="399.5" width="3" height="3"/>
<rect x="299.5" y="399.5" width="3" height="3"/><rect x="344.5" y="399.5" width="3" height="3"/>
<rect x="275.5" y="421.5" width="3" height="3"/>
</g>
<g fill="#000">
<rect x="171" y="238" width="8" height="8"/><rect x="274" y="238" width="8" height="8"/><rect x="378" y="238" width="8" height="8"/>
<rect x="171" y="332" width="8" height="8"/><rect x="378" y="332" width="8" height="8"/>
<rect x="171" y="425" width="8" height="8"/><rect x="274" y="425" width="8" height="8"/><rect x="378" y="425" width="8" height="8"/>
</g>
<path d="M275.5,333.5 L280.5,338.5 M280.5,333.5 L275.5,338.5" stroke="#333" stroke-width="1.6"/>
</svg>
<div class="rl" style="font-size:9.5px;letter-spacing:-0.4px;left:0px;top:259px;transform:rotate(-90deg);transform-origin:center">300</div>
<div class="rl" style="font-size:9.5px;letter-spacing:-0.4px;left:0px;top:334px;transform:rotate(-90deg);transform-origin:center">250</div>
<div class="rl" style="font-size:9.5px;letter-spacing:-0.4px;left:0px;top:409px;transform:rotate(-90deg);transform-origin:center">200</div>
<div class="rl" style="font-size:9.5px;letter-spacing:-0.4px;left:0px;top:483px;transform:rotate(-90deg);transform-origin:center">150</div>
</body></html>
